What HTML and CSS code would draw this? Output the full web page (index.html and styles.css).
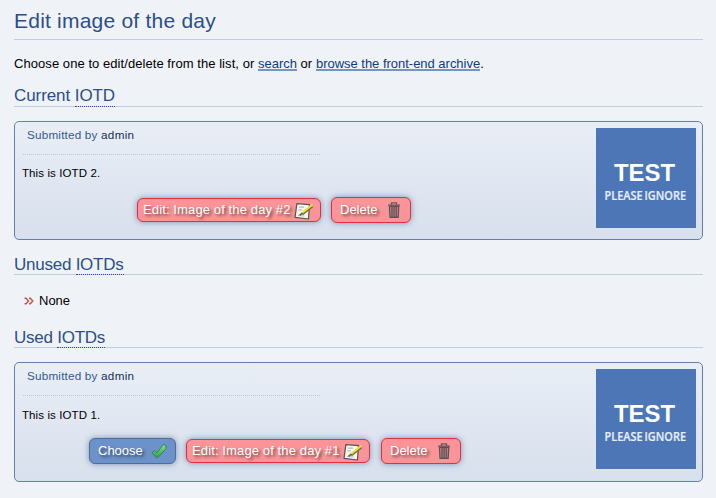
FILE: index.html
```html
<!DOCTYPE html>
<html lang="en">
<head>
<meta charset="utf-8">
<title>Edit image of the day</title>
<link rel="stylesheet" href="styles.css">
</head>
<body>
<svg width="0" height="0" class="defs" aria-hidden="true">
  <linearGradient id="green" x1="0" y1="0" x2="0" y2="1"><stop offset="0" stop-color="#8fe08a"/><stop offset="1" stop-color="#23a545"/></linearGradient>
  <symbol id="check" viewBox="0 0 16 16"><path d="M1 9.8 3.6 7.6 6 9.8 12.4 1.4 14.8 2.6 15 5.6 7 14.6 5.3 14.6Z" fill="url(#green)" stroke="#2b7f51" stroke-width=".9" stroke-linejoin="round"/></symbol>
  <symbol id="edit" viewBox="0 0 18 16"><path d="M2.6 1.3 14 2.2 13 15.2 .9 13.7Z" fill="#f6f6f1" stroke="#5c5351" stroke-width="1.1" stroke-linejoin="round"/><path d="M4.5 4.5h4.5M4 7h3M3.5 12l6 .5" stroke="#bcbcb7" fill="none"/><path d="M7.4 11 16.6 3.9" stroke="#77712e" stroke-width="2"/><path d="M7.2 9.8 16.5 2.4" stroke="#e4e43b" stroke-width="1.9"/><path d="M5 12 7.6 9.8" stroke="#555" stroke-width="1.4"/></symbol>
  <symbol id="trash" viewBox="0 0 14 16"><path d="M4.5 2.4V.9h5v1.5M1 3.1h12" fill="none" stroke="#665758" stroke-width="1.3"/><path d="M2.4 4.3h9.4L11.2 15.4H3Z" fill="#bb8588" stroke="#5d5052" stroke-width="1.2"/><path d="M5 4.5v10.5M7.1 4.5v10.5M9.2 4.5v10.5" stroke="#56494b" stroke-width="1.1"/></symbol>
</svg>
<h1>Edit image of the day</h1>
<p class="intro">Choose one to edit/delete from the list, or <a href="#">search</a> or <a href="#">browse the front-end archive</a>.</p>

<h2 class="current">Current <abbr>IOTD</abbr></h2>
<section class="card">
  <div class="content">
    <p class="byline">Submitted by <a href="#">admin</a></p>
    <p class="desc">This is IOTD 2.</p>
    <div class="actions">
      <button class="btn edit"><span>Edit: Image of the day #2</span><svg width="20" height="18"><use href="#edit"/></svg></button>
      <button class="btn"><span>Delete</span><svg width="14" height="16"><use href="#trash"/></svg></button>
    </div>
  </div>
  <svg class="thumb" width="100" height="100"><rect width="100" height="100" fill="#4c76b6"/><text x="18" y="53" textLength="61" lengthAdjust="spacingAndGlyphs" class="thumb-title">TEST</text><text x="8.5" y="72" textLength="81.5" lengthAdjust="spacingAndGlyphs" class="thumb-sub">PLEASE IGNORE</text></svg>
</section>

<h2 class="unused">Unused <abbr>IOTDs</abbr></h2>
<ul><li><svg width="10" height="8" viewBox="0 0 10 8"><path d="M.5 1.2H2L4.5 4 2 6.8H.5M5 1.2H6.3L8.8 4 6.3 6.8H5" fill="none" stroke="#bf5a48" stroke-width="1.5"/></svg>None</li></ul>

<h2 class="used">Used <abbr>IOTDs</abbr></h2>
<section class="card tall">
  <div class="content">
    <p class="byline">Submitted by <a href="#">admin</a></p>
    <p class="desc">This is IOTD 1.</p>
    <div class="actions">
      <button class="btn choose"><span>Choose</span><svg width="16" height="16"><use href="#check"/></svg></button>
      <button class="btn edit"><span>Edit: Image of the day #1</span><svg width="20" height="18"><use href="#edit"/></svg></button>
      <button class="btn"><span>Delete</span><svg width="14" height="16"><use href="#trash"/></svg></button>
    </div>
  </div>
  <svg class="thumb" width="100" height="100"><rect width="100" height="100" fill="#4c76b6"/><text x="18" y="53" textLength="61" lengthAdjust="spacingAndGlyphs" class="thumb-title">TEST</text><text x="8.5" y="72" textLength="81.5" lengthAdjust="spacingAndGlyphs" class="thumb-sub">PLEASE IGNORE</text></svg>
</section>
</body>
</html>
```
FILE: styles.css
```css
* { box-sizing: border-box; }
body { margin: 0; padding: 9px 13px 0 14px; height: 498px; overflow: hidden; background: #eff3f8; color: #000; font: 13px/16px "Liberation Sans", Arial, sans-serif; }
.defs { position: absolute; }
h1, h2, p, ul { margin: 0; padding: 0; font-weight: normal; }
h1 { height: 31px; border-bottom: 1px solid #c0cce4; color: #2c4f86; font-size: 21px; line-height: 24px; letter-spacing: .22px; }
.intro { margin-top: 16px; height: 16px; letter-spacing: .06px; }
.intro a { color: #133a78; text-decoration: none; border-bottom: 2px solid #7895b8; display: inline-block; height: 15px; letter-spacing: -.02px; }
h2 { height: 21px; border-bottom: 1px solid #c0cce4; color: #2c4f86; font-size: 17px; line-height: 20px; letter-spacing: -.24px; }
h2 abbr { display: inline-block; height: 21px; border-bottom: 1px dotted #2c4f86; }
.current { margin-top: 14px; letter-spacing: -.08px; }
.card { display: flex; justify-content: space-between; margin-top: 14px; height: 119px; padding: 6px; border: 1px solid #6180ab; border-radius: 5px; background: linear-gradient(#e9eef6, #d8e0ed); }
.card.tall { height: 120px; }
.content { width: 520px; padding-left: 1px; }
.byline { width: 297px; margin-left: 1px; height: 27px; padding-left: 4px; border-bottom: 1px dotted #bac5d5; color: #35598f; font-size: 11.7px; line-height: 14px; letter-spacing: .2px; }
.byline a { color: #182f54; text-decoration: none; letter-spacing: .3px; }
.desc { margin-top: 11px; font-size: 11.5px; line-height: 15px; letter-spacing: .1px; }
.actions { display: flex; align-items: center; gap: 10px; height: 26px; margin: 16px 0 0 115px; }
.tall .actions { margin: 15px 0 0 67px; }
.tall .edit { margin-right: 1px; }
.tall .desc { margin-top: 12px; }
.btn { display: flex; flex: none; align-items: center; justify-content: space-between; width: 80px; height: 26px; padding: 0 9px 0 8px; border: 1px solid #dc3342; border-radius: 6px; background: #fb9498; color: #fff; font: 13px/16px "Liberation Sans", Arial, sans-serif; text-shadow: 2px 2px 3px rgba(0, 0, 0, .6); box-shadow: 0 0 6px rgba(70, 100, 150, .65); white-space: nowrap; }
.edit { width: 184px; height: 24px; padding: 0 6px 0 5px; letter-spacing: .12px; }
.edit svg { position: relative; top: 1px; }
.choose { width: 87px; padding-right: 8px; border-color: #536e95; background: #6c92cb; }
.thumb { flex: none; }
.thumb-title { fill: #fff; font: bold 24.5px "Liberation Sans", Arial, sans-serif; }
.thumb-sub { fill: #e8f0fc; stroke: #e8f0fc; stroke-width: .2px; font: 600 12px "Open Sans", sans-serif; word-spacing: -1px; }
h2.unused, h2.used { line-height: 21px; }
h2.unused abbr, h2.used abbr { line-height: 21px; }
.unused { margin-top: 14px; }
ul { list-style: none; margin-top: 18px; }
li { display: flex; align-items: center; gap: 5px; height: 16px; padding-left: 10px; }
.used { margin-top: 18px; }
```
